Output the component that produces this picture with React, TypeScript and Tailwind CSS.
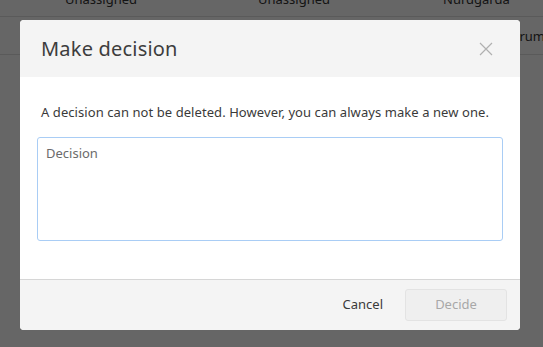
import React from "react";

const font = { fontFamily: '"Noto Sans", "Open Sans", sans-serif' };

function BackgroundTable() {
  return (
    <div className="w-full text-[13px] text-[#333]">
      <div className="grid grid-cols-[193px_193px_1fr] h-[17px] border-b border-[#e0e0e0] items-end">
        <div className="pl-[65px] -mb-[3px] leading-[16px] translate-y-[-12px]">Unassigned</div>
        <div className="pl-[65px] -mb-[3px] leading-[16px] translate-y-[-12px]">Unassigned</div>
        <div className="pl-[57px] -mb-[3px] leading-[16px] translate-y-[-12px] whitespace-nowrap">Nurdgarda</div>
      </div>
      <div className="flex h-[38px] border-b border-[#e0e0e0] items-center justify-end">
        <span className="leading-[16px] -mr-[2px]">Forum</span>
      </div>
    </div>
  );
}

export default function App() {
  return (
    <div className="relative h-[347px] w-[543px] overflow-hidden bg-white" style={font}>
      <BackgroundTable />
      <div className="absolute inset-0 bg-black/60 flex pl-[20px] pt-[20px]">
        <div className="w-[500px] h-[310px] rounded-[4px] bg-white flex flex-col overflow-hidden">
          <div className="h-[57px] bg-[#f4f4f4] flex items-center justify-between pl-[21px] pr-[27px]">
            <h2 className="text-[20px] tracking-[0.2px] text-[#3d3d3d] leading-none">Make decision</h2>
            <button className="text-[#b0b0b0]">
              <svg width="14" height="14" viewBox="0 0 14 14" fill="none" stroke="currentColor" strokeWidth="1.2">
                <path d="M1 1 13 13M13 1 1 13" />
              </svg>
            </button>
          </div>
          <div className="flex-1 flex flex-col pt-[25px] px-[17px]">
            <p className="px-[4px] text-[13px] leading-[20px] tracking-[0.07px] text-[#3a3a3a]">
              A decision can not be deleted. However, you can always make a new one.
            </p>
            <textarea
              placeholder="Decision"
              className="mt-[15px] h-[104px] w-full resize-none rounded-[3px] border border-[#a9cdf5] px-[8px] py-[5px] text-[13px] leading-[20px] text-[#333] placeholder:text-[#6b6b6b] outline-none"
              style={font}
            />
          </div>
          <div className="h-[51px] border-t border-[#d6d6d6] bg-[#f4f4f4] flex items-center justify-end pr-[13px]">
            <button className="px-[10px] text-[13px] text-[#3a3a3a] mr-[12px]">Cancel</button>
            <button className="h-[32px] w-[102px] rounded-[3px] border border-[#e3e3e3] bg-[#efefef] text-[13px] text-[#a8a8a8]">
              Decide
            </button>
          </div>
        </div>
      </div>
    </div>
  );
}
